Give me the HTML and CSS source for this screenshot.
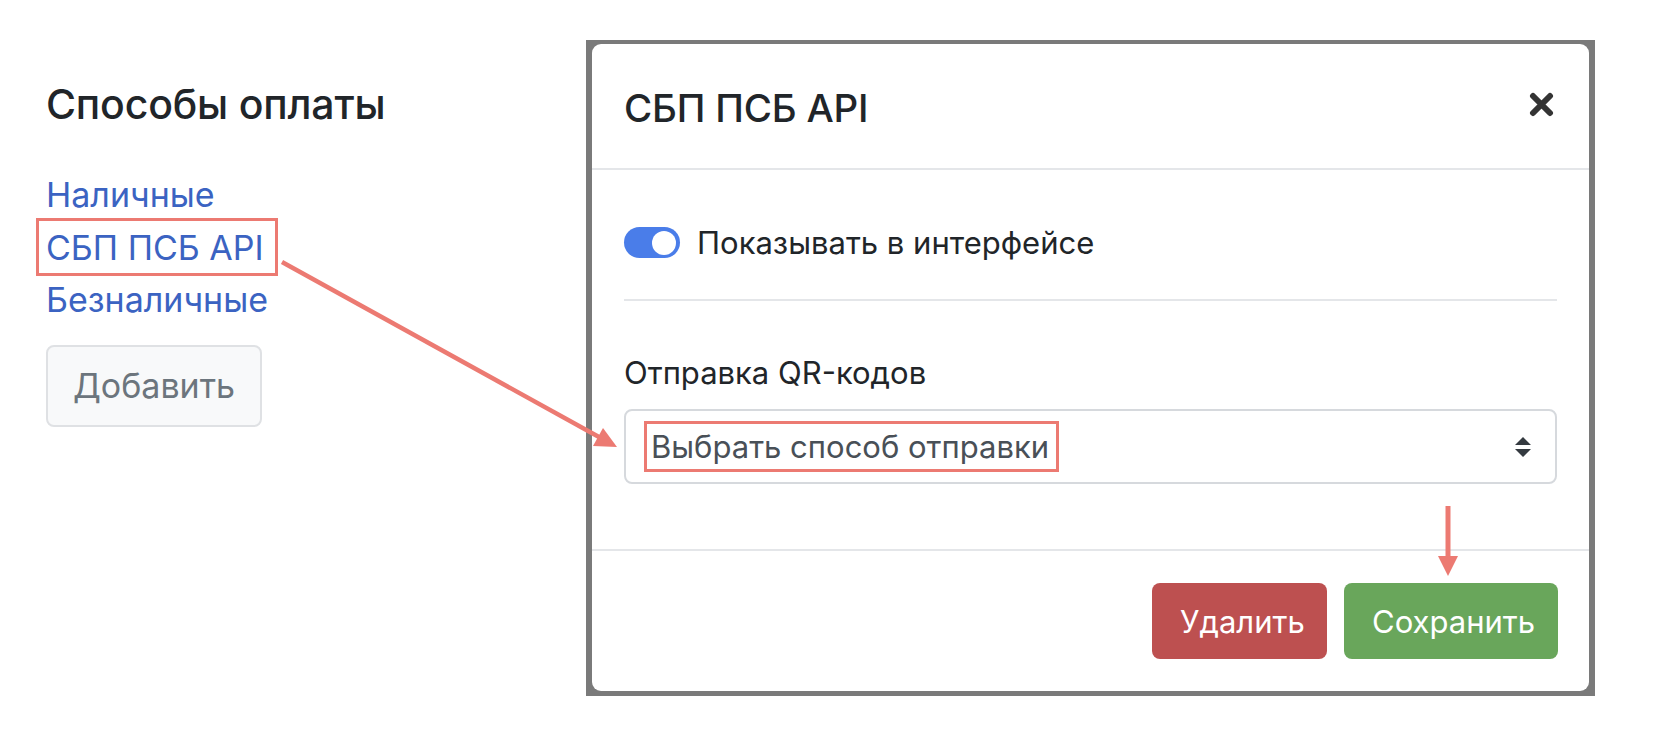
FILE: index.html
```html
<!DOCTYPE html>
<html lang="ru">
<head>
<meta charset="utf-8">
<title>Способы оплаты</title>
<link rel="stylesheet" href="styles.css">
</head>
<body>
<div class="page">

  <!-- list of payment methods -->
  <div class="methods">
    <h4 class="methods-title">Способы оплаты</h4>
    <div class="methods-list">
      <a href="#">Наличные</a>
      <a href="#" class="marked">СБП ПСБ API</a>
      <a href="#">Безналичные</a>
    </div>
    <button class="btn btn-light">Добавить</button>
  </div>

  <!-- edit dialog -->
  <div class="backdrop">
    <div class="modal">
      <div class="modal-header">
        <h5 class="modal-title">СБП ПСБ API</h5>
        <button class="close">
          <svg width="25" height="25" viewBox="0 0 25 25"><path d="M4 4L21 21M21 4L4 21" stroke="#343434" stroke-width="6" stroke-linecap="round"/></svg>
        </button>
      </div>
      <div class="modal-body">
        <label class="switch-row">
          <span class="switch"><span class="knob"></span></span>
          Показывать в интерфейсе
        </label>
        <hr class="sep">
        <div class="field-label">Отправка QR-кодов</div>
        <div class="select">
          <span class="select-value">Выбрать способ отправки</span>
          <svg width="16" height="20" viewBox="0 0 4 5"><path d="M2 0L0 2h4zm0 5L0 3h4z" fill="#343a40"/></svg>
        </div>
      </div>
      <div class="modal-footer">
        <button class="btn btn-danger">Удалить</button>
        <button class="btn btn-success">Сохранить</button>
      </div>
    </div>
  </div>
</div>

<!-- hint arrows -->
<svg class="pointers" width="1654" height="740" viewBox="0 0 1654 740">
  <line x1="282" y1="262" x2="599" y2="437" stroke="#ec7a72" stroke-width="4.5"/>
  <polygon points="617,447 593,446 603,428" fill="#ec7a72"/>
  <line x1="1448" y1="506" x2="1448" y2="558" stroke="#ec7a72" stroke-width="5"/>
  <polygon points="1438,556 1458,556 1448,576" fill="#ec7a72"/>
</svg>
</body>
</html>
```

FILE: styles.css
```css
body {
margin: 0;
background: #fff;
color: #212529;
font-family: "Inter", "Noto Sans", sans-serif;
position: relative;
}

.page {
display: flex;
align-items: flex-start;
padding-top: 40px;
}

/* ----------- methods ----------- */
.methods {
width: 540px;
padding-left: 46px;
display: flex;
flex-direction: column;
align-items: flex-start;
}
.methods-title {
margin: 40px 0 0 0;
font-size: 41px;
font-weight: 500;
line-height: 1.2;
letter-spacing: -0.2px;
}
.methods-list {
margin-top: 40px;
display: flex;
flex-direction: column;
align-items: flex-start;
}
.methods-list a {
font-size: 34px;
line-height: 52.5px;
color: #3b63c2;
text-decoration: none;
position: relative;
}
.methods-list a.marked::after {
content: "";
position: absolute;
left: -10px;
right: -14px;
top: -4px;
bottom: -2px;
border: 3px solid #ec7a72;
}

.btn {
font-family: inherit;
border: 2px solid transparent;
border-radius: 8px;
cursor: pointer;
}
.btn-light {
margin-top: 18px;
width: 216px;
height: 82px;
font-size: 34px;
color: #6c757d;
background: #f8f9fa;
border-color: #dfe1e4;
}

/* ----------- dialog ----------- */
.backdrop {
background: #7a7a7a;
padding: 4px 6px 5px 6px;
width: 997px;
}
.modal {
background: #fff;
border-radius: 9px;
height: 647px;
display: flex;
flex-direction: column;
}
.modal-header {
display: flex;
justify-content: space-between;
align-items: flex-start;
padding: 42px 35px 38px 32px;
border-bottom: 2px solid #e4e6e9;
}
.modal-title {
margin: 0;
font-size: 38.5px;
font-weight: 500;
line-height: 44px;
letter-spacing: -0.2px;
}
.close {
margin-top: 6px;
padding: 0;
border: 0;
background: none;
line-height: 0;
}

.modal-body {
padding: 51px 32px 65px 32px;
font-size: 31px;
line-height: 43.5px;
}
.switch-row {
display: flex;
align-items: center;
gap: 17px;
}
.switch {
width: 56px;
height: 31px;
border-radius: 16px;
background: #4a7de9;
display: flex;
align-items: center;
justify-content: flex-end;
padding-right: 4px;
box-sizing: border-box;
}
.knob {
width: 24px;
height: 24px;
border-radius: 50%;
background: #fff;
}
.sep {
margin: 34px 0 0 0;
border: 0;
border-top: 2px solid #e4e6e9;
}
.field-label {
margin-top: 50px;
}
.select {
margin-top: 15px;
height: 75px;
box-sizing: border-box;
border: 2px solid #d6d9dd;
border-radius: 8px;
display: flex;
align-items: center;
justify-content: space-between;
padding: 0 24px 0 18px;
color: #495057;
}
.select-value {
border: 3px solid #ec7a72;
padding: 0 7px 0 4px;
line-height: 45px;
}

.modal-footer {
margin-top: auto;
display: flex;
justify-content: flex-end;
gap: 17px;
padding: 32px 31px 32px 32px;
border-top: 2px solid #e4e6e9;
}
.modal-footer .btn {
height: 76px;
font-size: 31px;
color: #fff;
padding: 0 26px;
}
.btn-danger {
width: 175px;
background: #bd5050;
}
.btn-success {
width: 214px;
background: #69a65b;
}

.pointers {
position: absolute;
left: 0;
top: 0;
pointer-events: none;
}
```
